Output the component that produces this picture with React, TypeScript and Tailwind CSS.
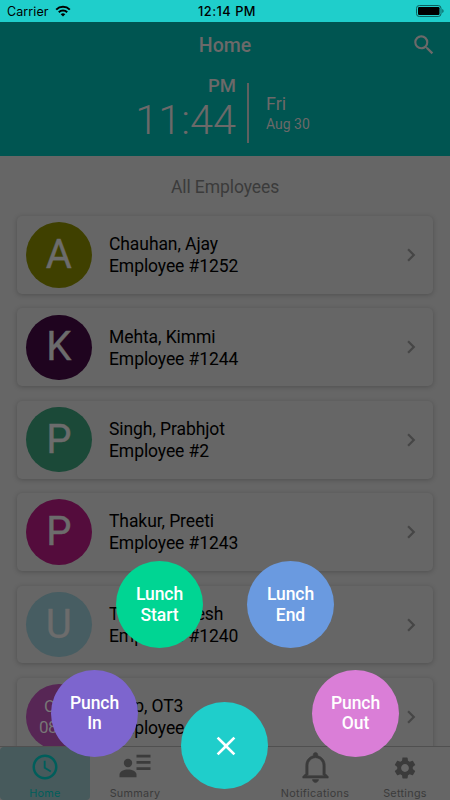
import React from "react";
import {
  MdAccessTime,
  MdChevronRight,
  MdClose,
  MdSearch,
  MdSettings,
} from "react-icons/md";
import { IoMdNotificationsOutline } from "react-icons/io";

interface Employee {
  name: string;
  number: string;
  initial: string;
  color: string;
}

const employees: Employee[] = [
  { name: "Chauhan, Ajay", number: "#1252", initial: "A", color: "bg-[#3f4000]" },
  { name: "Mehta, Kimmi", number: "#1244", initial: "K", color: "bg-[#1f041f]" },
  { name: "Singh, Prabhjot", number: "#2", initial: "P", color: "bg-[#1b4938]" },
  { name: "Thakur, Preeti", number: "#1243", initial: "P", color: "bg-[#540c3c]" },
  { name: "Thakur, Umesh", number: "#1240", initial: "U", color: "bg-[#475d62]" },
];

const StatusBar = () => (
  <div className="relative flex h-[22px] shrink-0 items-center justify-between bg-[#1fcecb] pl-[7px] pr-[6px] font-['Inter',sans-serif] text-black">
    <div className="flex items-center gap-[6px]">
      <span className="pt-[2px] text-[12.5px] tracking-[0.1px]">Carrier</span>
      <svg width="16" height="12" viewBox="0 0 16 12">
        <g fill="none" stroke="black" strokeWidth="2">
          <path d="M1.2 4.6a9.7 9.7 0 0 1 13.6 0" />
          <path d="M3.8 7.3a5.9 5.9 0 0 1 8.4 0" />
        </g>
        <path d="M8 11.6 5.7 9.3a3.3 3.3 0 0 1 4.6 0z" />
      </svg>
    </div>
    <span className="absolute left-0 w-[454px] pt-px text-center text-[12.8px] font-medium tracking-[0.5px]">
      12:14 PM
    </span>
    <svg width="28" height="12" viewBox="0 0 28 12">
      <rect x="0.5" y="0.5" width="24.5" height="11" rx="2.8" fill="none" stroke="#0b5f5d" />
      <rect x="2" y="2" width="21.5" height="8" rx="1.2" />
      <path d="M26.3 4v4q1.3-.5 1.3-2t-1.3-2" fill="#0b5f5d" />
    </svg>
  </div>
);

const Header = () => (
  <div className="h-[134px] shrink-0 bg-[#005551] text-[#6c6969]">
    <div className="relative flex h-[47px] items-center justify-center">
      <h1 className="pt-px text-[19.5px] font-medium">Home</h1>
      <MdSearch className="absolute right-[13px] top-[10px] h-[26px] w-[26px]" />
    </div>
    <div className="flex pl-[135px] pt-[6px]">
      <div className="flex w-[101px] flex-col items-end">
        <p className="pt-px text-[18.5px] font-medium leading-[20px]">PM</p>
        <p className="whitespace-nowrap text-[41.5px] font-light leading-[48px]">11:44</p>
      </div>
      <div className="ml-[11px] mt-[8px] h-[60px] w-[2px] bg-[#5f6060]" />
      <div className="ml-[17px] pt-[18px]">
        <p className="text-[18px] leading-[22px]">Fri</p>
        <p className="text-[14px] leading-[19px]">Aug 30</p>
      </div>
    </div>
  </div>
);

const cardClass =
  "flex h-[77.9px] shrink-0 items-center rounded-[5px] bg-[#666666] px-[9px] shadow-[0_1px_5px_rgba(0,0,0,0.22)]";

const EmployeeCard = ({ name, number, initial, color }: Employee) => (
  <div className={cardClass}>
    <div
      className={`${color} flex h-[65.5px] w-[65.5px] items-center justify-center rounded-full text-[40px] text-[#6c6c6c] [-webkit-text-stroke:0.4px_#6c6c6c]`}
    >
      {initial}
    </div>
    <div className="ml-[17.5px] flex-1 pt-[0.5px] text-[17.5px] leading-[22px] tracking-[-0.08px] text-black">
      <p>{name}</p>
      <p>Employee {number}</p>
    </div>
    <MdChevronRight className="h-[26px] w-[26px] text-[#464646]" />
  </div>
);

const OvertimeCard = () => (
  <div className={cardClass}>
    <div className="flex h-[65.5px] w-[65.5px] flex-col items-center justify-center rounded-full bg-[#572655] text-[17px] leading-[21px] tracking-[-0.6px] text-[#777]">
      <p>OT3</p>
      <p>08:00</p>
    </div>
    <div className="ml-[17.5px] flex-1 pt-[0.5px] text-[17.5px] leading-[22px] tracking-[-0.08px] text-black">
      <p>Emp, OT3</p>
      <p>Employee #3</p>
    </div>
    <MdChevronRight className="h-[26px] w-[26px] text-[#464646]" />
  </div>
);

const SummaryIcon = () => (
  <svg width="32" height="24" viewBox="0 0 32 24" fill="currentColor">
    <circle cx="9" cy="9" r="4.2" />
    <path d="M.5 23.3v-2.5c0-3.4 4.6-5.2 8.5-5.2s8.5 1.8 8.5 5.2v2.5z" />
    <path d="M17.5 .8h14v2.8h-14zM17.5 7h14v2.8h-14zM17.5 13.2h14v2.8h-14z" />
  </svg>
);

const TabBar = () => (
  <nav className="grid h-[54px] shrink-0 grid-cols-5 border-t border-[#505050] bg-[#666666] font-['Inter',sans-serif] text-[10.8px] leading-[13px] tracking-[0.3px] text-[#3b3b3b]">
    <div className="flex flex-col items-center rounded bg-[#475a5c] text-[#005e5b]">
      <MdAccessTime className="mt-[5px] h-[30px] w-[30px]" />
      <span className="mt-[5px]">Home</span>
    </div>
    <div className="flex flex-col items-center">
      <div className="mt-[7px] h-[24px]">
        <SummaryIcon />
      </div>
      <span className="mt-[9px]">Summary</span>
    </div>
    <div />
    <div className="flex flex-col items-center">
      <IoMdNotificationsOutline className="mt-[2px] h-[37px] w-[37px] stroke-current [stroke-width:8]" />
      <span className="mt-px">Notifications</span>
    </div>
    <div className="flex flex-col items-center">
      <MdSettings className="mt-[8px] h-[26px] w-[26px]" />
      <span className="mt-[6px]">Settings</span>
    </div>
  </nav>
);

const actionClass =
  "absolute flex h-[87px] w-[87px] items-center justify-center rounded-full text-center text-[17.5px] font-medium leading-[20.5px] tracking-[-0.08px] text-white";

const PunchMenu = () => (
  <>
    <button className={`${actionClass} left-[116px] top-[561px] bg-[#00d593]`}>
      Lunch
      <br />
      Start
    </button>
    <button className={`${actionClass} left-[247px] top-[561px] bg-[#6a9ae0]`}>
      Lunch
      <br />
      End
    </button>
    <button className={`${actionClass} left-[51px] top-[669.5px] bg-[#7d65ce]`}>
      Punch
      <br />
      In
    </button>
    <button className={`${actionClass} left-[312px] top-[669.5px] bg-[#da7ed7]`}>
      Punch
      <br />
      Out
    </button>
    <button className={`${actionClass} left-[181px] top-[702px] bg-[#1fcecb] pl-[3px]`}>
      <MdClose className="h-[32px] w-[32px]" />
    </button>
  </>
);

const App = () => {
  return (
    <div className="relative flex h-[800px] w-[450px] flex-col overflow-hidden bg-[#666666] font-['Roboto',sans-serif]">
      <StatusBar />
      <Header />
      <main className="min-h-0 flex-1 overflow-hidden">
        <h2 className="pt-[20px] text-center text-[17.5px] leading-[22px] tracking-[-0.08px] text-[#3b3b3b]">
          All Employees
        </h2>
        <div className="mt-[18px] flex flex-col gap-[14.5px] px-[17px]">
          {employees.map((employee) => (
            <EmployeeCard key={employee.number} {...employee} />
          ))}
          <OvertimeCard />
        </div>
      </main>
      <TabBar />
      <PunchMenu />
    </div>
  );
};

export default App;
